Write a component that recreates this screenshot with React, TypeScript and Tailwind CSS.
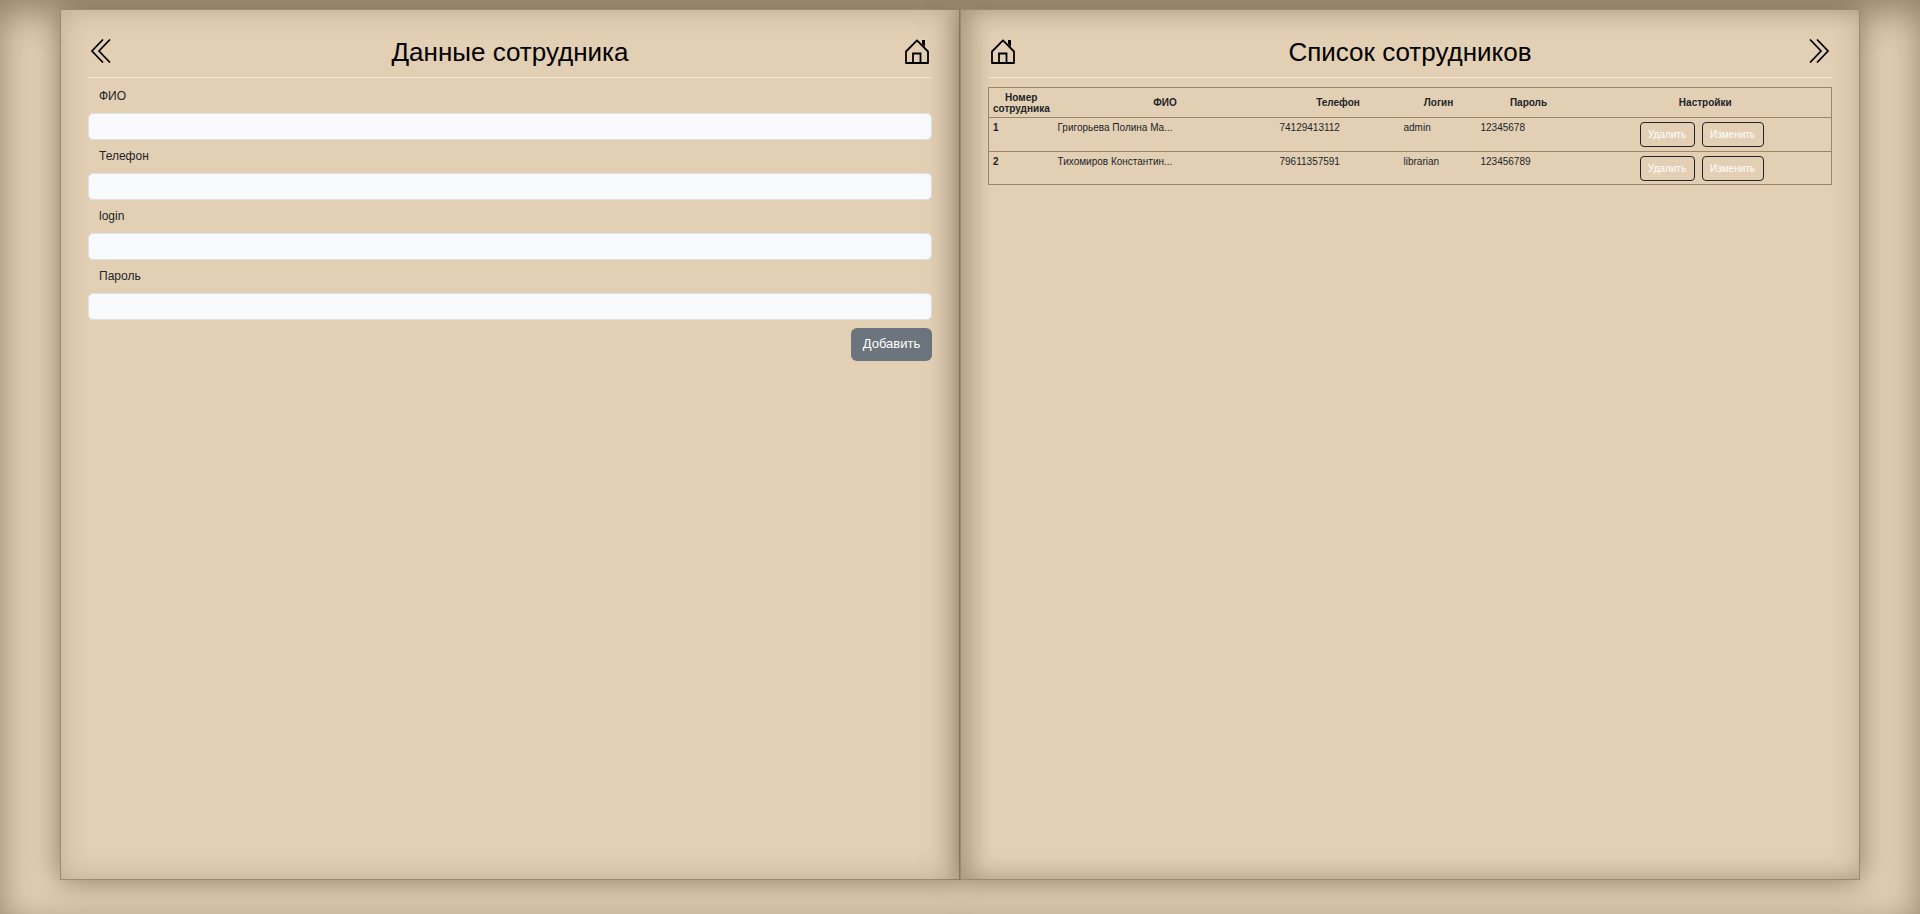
const font = "font-['Liberation_Sans',Arial,sans-serif]";

function ChevronsLeft() {
  return (
    <svg width="20" height="24" viewBox="0 0 20 24" fill="none" stroke="#000" strokeWidth="1.7" className="mr-[4px]">
      <path d="M12 0.5 L1 12 L12 23.5" />
      <path d="M19 0.5 L8 12 L19 23.5" />
    </svg>
  );
}

function ChevronsRight() {
  return (
    <svg width="20" height="24" viewBox="0 0 20 24" fill="none" stroke="#000" strokeWidth="1.7" className="ml-[4px]">
      <path d="M1 0.5 L12 12 L1 23.5" />
      <path d="M8 0.5 L19 12 L8 23.5" />
    </svg>
  );
}

function HomeIcon() {
  return (
    <svg width="24" height="25" viewBox="0 0 24 25" fill="none" stroke="#000" strokeWidth="1.8">
      <path d="M1 12.5 L12 1.3 L23 12.5 V24 H1 Z" strokeLinejoin="round" />
      <path d="M8 24 V14.5 H15.5 V24" />
      <path d="M17 1 H20 V8 L17 5 Z" fill="#000" stroke="none" />
    </svg>
  );
}

function Field({ label }: { label: string }) {
  return (
    <div>
      <label className="block h-[33px] pl-[11px] pt-[9px] text-[12px] leading-[14px] text-[#212529]">
        {label}
      </label>
      <input className="block h-[27px] w-full rounded-[5px] border border-[#dee2e6] bg-[#f8fafc]" />
    </div>
  );
}

function PageHeader({
  title,
  left,
  right,
}: {
  title: string;
  left: React.ReactNode;
  right: React.ReactNode;
}) {
  return (
    <div className="flex h-[68px] items-center justify-between border-b border-[#f3e6d0] px-[3px] pt-[15px]">
      {left}
      <h1 className="mt-[1px] text-[26px] font-normal leading-[30px] text-black">{title}</h1>
      {right}
    </div>
  );
}

const rows = [
  { id: 1, name: "Григорьева Полина Ма...", phone: "74129413112", login: "admin", password: "12345678", height: "h-[34px]" },
  { id: 2, name: "Тихомиров Константин...", phone: "79611357591", login: "librarian", password: "123456789", height: "h-[33px]" },
];

function EmployeesTable() {
  return (
    <table className="mt-[9px] w-full table-fixed border-collapse border border-[#9c8668] text-[10px] leading-[11px] text-[#212529]">
      <colgroup>
        <col className="w-[65px]" />
        <col className="w-[223px]" />
        <col className="w-[123px]" />
        <col className="w-[78px]" />
        <col className="w-[102px]" />
        <col />
      </colgroup>
      <thead>
        <tr className="h-[30px] border-b border-[#9c8668]">
          <th className="px-[4px] text-center font-bold">Номер сотрудника</th>
          <th className="text-center font-bold">ФИО</th>
          <th className="text-center font-bold">Телефон</th>
          <th className="text-center font-bold">Логин</th>
          <th className="text-center font-bold">Пароль</th>
          <th className="text-center font-bold">Настройки</th>
        </tr>
      </thead>
      <tbody>
        {rows.map((r) => (
          <tr key={r.id} className={`${r.height} border-b border-[#9c8668] align-top`}>
            <td className="px-[4px] pt-[4px] font-bold">{r.id}</td>
            <td className="px-[4px] pt-[4px]">{r.name}</td>
            <td className="px-[3px] pt-[4px]">{r.phone}</td>
            <td className="px-[4px] pt-[4px]">{r.login}</td>
            <td className="px-[3px] pt-[4px]">{r.password}</td>
            <td className="pl-[60px] pt-[4px]">
              <div className="flex gap-[7px]">
                <button className="h-[25px] w-[55px] rounded-[4px] border border-[#212529] text-[10px] text-white">
                  Удалить
                </button>
                <button className="h-[25px] w-[62px] rounded-[4px] border border-[#212529] text-[10px] text-white">
                  Изменить
                </button>
              </div>
            </td>
          </tr>
        ))}
      </tbody>
    </table>
  );
}

export default function App() {
  return (
    <div
      className={`${font} flex h-screen justify-center overflow-hidden bg-[#e2cfb4] pt-[9px] shadow-[inset_0_12px_36px_rgba(70,50,25,0.5)]`}
    >
      <section className="h-[871px] w-[900px] border border-[#9c8a6e] bg-[#e2cfb4] px-[27px] shadow-[0_0_28px_rgba(50,35,15,0.5),inset_0_0_28px_rgba(70,50,25,0.22)]">
        <PageHeader title="Данные сотрудника" left={<ChevronsLeft />} right={<HomeIcon />} />
        <form>
          <div className="mt-[2px]">
            <Field label="ФИО" />
            <Field label="Телефон" />
            <Field label="login" />
            <Field label="Пароль" />
          </div>
          <div className="mt-[8px] flex justify-end">
            <button
              type="button"
              className="h-[33px] w-[81px] rounded-[6px] bg-[#6c757d] pb-[2px] text-[13px] text-white"
            >
              Добавить
            </button>
          </div>
        </form>
      </section>
      <section className="h-[871px] w-[900px] border border-[#9c8a6e] bg-[#e2cfb4] px-[27px] shadow-[0_0_28px_rgba(50,35,15,0.5),inset_0_0_28px_rgba(70,50,25,0.22),inset_14px_0_20px_rgba(70,50,25,0.2)]">
        <PageHeader title="Список сотрудников" left={<HomeIcon />} right={<ChevronsRight />} />
        <EmployeesTable />
      </section>
    </div>
  );
}
